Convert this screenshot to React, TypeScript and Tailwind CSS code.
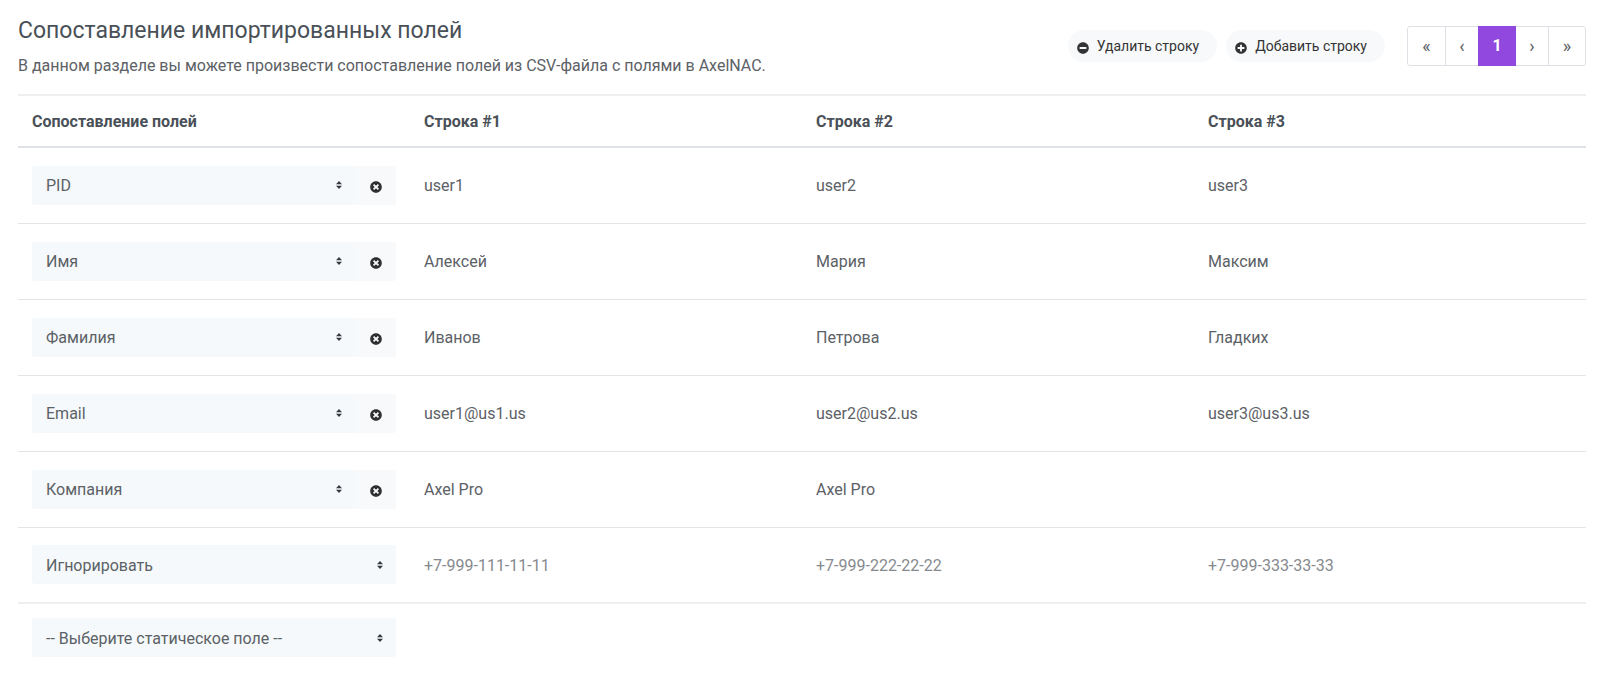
import { useState } from "react";
import { FaMinusCircle, FaPlusCircle, FaTimesCircle } from "react-icons/fa";

interface MappingRow {
  field: string;
  values: string[];
  ignored?: boolean;
}

const IGNORE = "Игнорировать";
const FIELDS = ["PID", "Имя", "Фамилия", "Email", "Компания"];

const INITIAL_ROWS: MappingRow[] = [
  { field: "PID", values: ["user1", "user2", "user3"] },
  { field: "Имя", values: ["Алексей", "Мария", "Максим"] },
  { field: "Фамилия", values: ["Иванов", "Петрова", "Гладких"] },
  { field: "Email", values: ["user1@us1.us", "user2@us2.us", "user3@us3.us"] },
  { field: "Компания", values: ["Axel Pro", "Axel Pro", ""] },
  { field: IGNORE, values: ["+7-999-111-11-11", "+7-999-222-22-22", "+7-999-333-33-33"] },
];

interface FieldSelectProps {
  label: string;
  value: string;
  options: string[];
  onChange: (value: string) => void;
  onClear?: () => void;
}

function FieldSelect({ label, value, options, onChange, onClear }: FieldSelectProps) {
  return (
    <div className="flex h-[39px] overflow-hidden rounded-[3px] bg-[#f5f9fc]">
      <div className="relative flex-1">
        <select
          aria-label={label}
          value={value}
          onChange={(e) => onChange(e.target.value)}
          className="h-full w-full appearance-none bg-transparent pl-3.5 pr-8 pt-0.5 text-[#5c6166] outline-none"
        >
          {options.map((option) => (
            <option key={option}>{option}</option>
          ))}
        </select>
        <svg
          className="pointer-events-none absolute right-[13px] top-1/2 h-2 w-1.5 -translate-y-1/2"
          viewBox="0 0 6 8"
          fill="#343a40"
        >
          <path d="M3 0 6 3.2H0zM3 8 0 4.8h6z" />
        </svg>
      </div>
      {onClear && (
        <button
          type="button"
          aria-label="Очистить"
          onClick={onClear}
          className="flex w-[41px] items-center justify-center bg-[#f8f9fb] pt-1 text-[#2f2f2f]"
        >
          <FaTimesCircle size={12} />
        </button>
      )}
    </div>
  );
}

export default function App() {
  const [rows, setRows] = useState(INITIAL_ROWS);
  const [columns, setColumns] = useState(3);
  const [staticField, setStaticField] = useState("-- Выберите статическое поле --");

  const setField = (index: number, field: string) =>
    setRows(rows.map((row, i) => (i === index ? { ...row, field } : row)));

  const headings = Array.from({ length: columns }, (_, i) => `Строка #${i + 1}`);
  const pillClass = "flex h-8 items-center gap-2 rounded-full bg-[#f8f9fb] pl-[9px] pr-[18px] text-sm text-[#343434]";
  const pageClass = "flex items-center justify-center text-lg leading-none";

  return (
    <main className="min-h-screen bg-white pb-7 pl-[18px] pr-3.5 pt-4 font-['Roboto','Noto_Sans',sans-serif] text-base text-[#5c6166]">
      <header className="flex items-start justify-between pb-4">
        <div>
          <h1 className="text-[23px] leading-[30px] text-[#495057]">Сопоставление импортированных полей</h1>
          <p className="mt-2 leading-6">
            В данном разделе вы можете произвести сопоставление полей из CSV-файла с полями в AxelNAC.
          </p>
        </div>
        <div className="flex items-center pt-2.5">
          <div className="flex gap-[9px]">
            <button type="button" className={pillClass} onClick={() => setColumns(Math.max(1, columns - 1))}>
              <FaMinusCircle size={12} className="mt-1" />
              Удалить строку
            </button>
            <button type="button" className={pillClass} onClick={() => setColumns(Math.min(3, columns + 1))}>
              <FaPlusCircle size={12} className="mt-1" />
              Добавить строку
            </button>
          </div>
          <nav
            aria-label="Страницы"
            className="ml-[22px] flex h-10 rounded-[3px] border border-[#dee2e6] text-[#5c6166]"
          >
            <button type="button" className={`${pageClass} w-[38px] border-r border-[#dee2e6]`}>«</button>
            <button type="button" className={`${pageClass} w-8`}>‹</button>
            <button type="button" aria-current="page" className="-my-px w-[38px] bg-[#9048de] font-bold text-white">
              1
            </button>
            <button type="button" className={`${pageClass} w-[33px] border-r border-[#dee2e6]`}>›</button>
            <button type="button" className={`${pageClass} w-9`}>»</button>
          </nav>
        </div>
      </header>

      <table className="w-full table-fixed border-collapse text-left">
        <thead>
          <tr className="h-[52px] border-b-2 border-t-2 border-b-[#dee2e6] border-t-[#eeeff0] text-[#495057]">
            <th className="px-3.5 pt-0.5 font-bold">Сопоставление полей</th>
            {headings.map((heading) => (
              <th key={heading} className="px-3.5 pt-0.5 font-bold">{heading}</th>
            ))}
          </tr>
        </thead>
        <tbody>
          {rows.map((row, i) => {
            const ignored = row.field === IGNORE;
            return (
              <tr key={i} className="h-[76px] border-b border-[#e2e5e8] last:border-b-2 last:border-[#eeeff0]">
                <td className="px-3.5">
                  <FieldSelect
                    label={`Поле ${i + 1}`}
                    value={row.field}
                    options={[...FIELDS, IGNORE]}
                    onChange={(field) => setField(i, field)}
                    onClear={ignored ? undefined : () => setField(i, IGNORE)}
                  />
                </td>
                {headings.map((heading, j) => (
                  <td key={heading} className={ignored ? "px-3.5 pt-0.5 text-[#868a8e]" : "px-3.5 pt-0.5"}>
                    {row.values[j]}
                  </td>
                ))}
              </tr>
            );
          })}
        </tbody>
      </table>

      <div className="w-1/4 px-3.5 pt-3.5">
        <FieldSelect
          label="Статическое поле"
          value={staticField}
          options={["-- Выберите статическое поле --", ...FIELDS]}
          onChange={setStaticField}
        />
      </div>
    </main>
  );
}
